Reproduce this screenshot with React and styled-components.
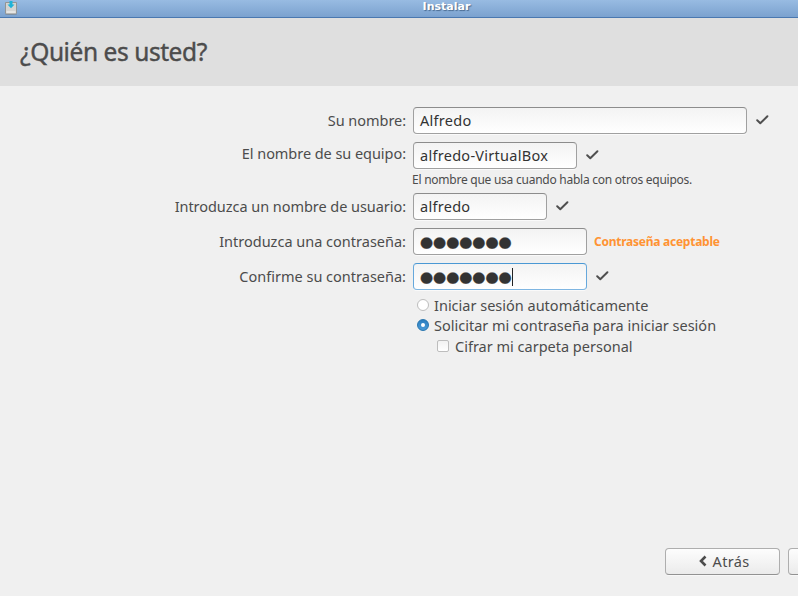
import React from 'react';
import styled, { createGlobalStyle, css } from 'styled-components';

const GlobalStyle = createGlobalStyle`
  * { box-sizing: border-box; }
  body {
    margin: 0;
    overflow: hidden;
    background: #f0f0f0;
    color: #4c4c4c;
    font: 14.5px/20px "Noto Sans", sans-serif;
  }
`;

const Window = styled.div`
  display: flex;
  flex-direction: column;
  width: 100%;
  height: 596px;
  overflow: hidden;
  background: #f0f0f0;
`;

const TitleBar = styled.header`
  display: grid;
  grid-template-columns: 24px 1fr;
  height: 18px;
  flex: none;
  background: linear-gradient(#98bbe2, #7ba2cf);
  border-bottom: 1px solid #4a78b0;
`;

const AppIcon = styled.svg`
  width: 14px;
  height: 16px;
  margin-left: 4px;
`;

const WindowTitle = styled.div`
  padding-left: 71px;
  text-align: center;
  color: #fff;
  font: bold 11px/14px "DejaVu Sans", sans-serif;
  text-shadow: 1px 1px 1px #48698f;
`;

const Banner = styled.div`
  height: 68px;
  flex: none;
  padding: 17px 0 0 20px;
  background: #dfdfdf;
`;

const Heading = styled.h1`
  margin: 0;
  font-size: 24.5px;
  font-weight: 400;
  line-height: 34px;
  letter-spacing: -0.43px;
  -webkit-text-stroke: 0.4px #4c4c4c;
`;

const Form = styled.form`
  display: flex;
  flex-direction: column;
  gap: 8px;
  padding-top: 21px;
`;

const Row = styled.div`
  display: grid;
  grid-template-columns: 406px 1fr;
  column-gap: 7px;
`;

const Label = styled.label`
  height: 27px;
  padding-top: ${(p) => (p.$raised ? 1 : 3)}px;
  text-align: right;
  white-space: nowrap;
  letter-spacing: ${(p) => p.$track ?? -0.05}px;
`;

const Control = styled.div`
  display: flex;
  align-items: center;
  height: 27px;
`;

const Field = styled.div`
  display: flex;
  align-items: center;
  width: ${(p) => p.$width}px;
  height: 27px;
  padding: 0 6px 2px;
  border: 1px solid #a0a0a0;
  border-top-color: #8c8c8c;
  border-radius: 4px;
  background: linear-gradient(#f3f3f3, #fff);
  box-shadow: 0 1px 0 #fafafa;
  color: #333;
  letter-spacing: 0.28px;
  ${(p) =>
    p.$focused &&
    css`
      border-color: #4a98d4 #66a8dc #7fb6e2;
    `}
`;

const Mask = styled.span`
  font: 15px/20px "DejaVu Sans", sans-serif;
  letter-spacing: 0;
  padding-top: 3px;
  -webkit-text-stroke: 0.4px #333;
`;

const Caret = styled.span`
  width: 1px;
  height: 18px;
  margin-top: 2px;
  background: #222;
`;

const Check = styled.svg`
  width: 13px;
  height: 10px;
  margin: 0 0 2px 9px;
  flex: none;
`;

const Hint = styled.div`
  height: 16px;
  margin-left: -1px;
  padding-top: 2px;
  font-size: 12px;
  line-height: 18px;
  letter-spacing: -0.25px;
`;

const Strength = styled.span`
  margin-left: 7px;
  color: #ff9333;
  font-size: 12px;
  font-weight: 700;
  line-height: 18px;
  letter-spacing: -0.25px;
`;

const Options = styled.div`
  display: flex;
  flex-direction: column;
  margin: -3px 0 0 417px;
`;

const Option = styled.label`
  display: flex;
  align-items: center;
  gap: 5px;
  height: 20px;
  margin-top: ${(p) => (p.$nested ? 1 : 0)}px;
  padding-left: ${(p) => (p.$nested ? 20 : 0)}px;
`;

const Radio = styled.span`
  display: grid;
  place-items: center;
  width: 12px;
  height: 12px;
  margin-bottom: 1px;
  border: 1px solid #bdbdbd;
  border-radius: 50%;
  background: #fff;
  ${(p) =>
    p.$on &&
    css`
      border-color: #2675af;
      background: linear-gradient(#2b7ebf, #4b9bd8);
      &::after {
        content: '';
        width: 4px;
        height: 4px;
        border-radius: 50%;
        background: #fff;
      }
    `}
`;

const Checkbox = styled.span`
  width: 12px;
  height: 12px;
  margin: 0 1px 1px 0;
  border: 1px solid #bdbdbd;
  border-radius: 2px;
  background: linear-gradient(#f2f2f2, #fff);
`;

const Footer = styled.footer`
  display: flex;
  gap: 8px;
  margin-top: auto;
  padding: 0 0 21px 665px;
`;

const Button = styled.button`
  display: flex;
  flex: none;
  align-items: center;
  justify-content: center;
  gap: 6px;
  width: 115px;
  height: 27px;
  padding: 0 0 1px 3px;
  border: 1px solid #aeaeae;
  border-bottom-color: #929292;
  border-radius: 4px;
  background: linear-gradient(#fdfdfd, #ebebeb);
  box-shadow: 0 1px 0 #f8f8f8;
  color: #4c4c4c;
  font: 14.5px/20px "Noto Sans", sans-serif;
  letter-spacing: 0.3px;
`;

const Chevron = styled.svg`
  width: 8px;
  height: 12px;
`;

const CheckMark = () => (
  <Check viewBox="0 0 13 10">
    <path d="M1.2 5.200 L4.300 8.200 L11.400 1.300" fill="none" stroke="#4f4f4f" strokeWidth="2" strokeLinecap="round" strokeLinejoin="round" />
  </Check>
);

const DOTS = '●'.repeat(7);

export default function App() {
  return (
    <Window>
      <GlobalStyle />
      <TitleBar>
        <AppIcon viewBox="0 0 14 16">
          <ellipse cx="7" cy="14" rx="6" ry="1" fill="#5f7892" opacity=".6" />
          <path d="M1.500 2.500h11v10.500a1 1 0 0 1-1 1h-9a1 1 0 0 1-1-1z" fill="#d4d4d2" stroke="#929595" />
          <path d="M2.500 12h9" stroke="#f7f7f5" />
          <path d="M5.500 1h3v3.500h2L7 8.200 3.500 4.500h2z" fill="#1eb3d8" />
        </AppIcon>
        <WindowTitle>Instalar</WindowTitle>
      </TitleBar>
      <Banner>
        <Heading>¿Quién es usted?</Heading>
      </Banner>
      <Form>
        <Row>
          <Label>Su nombre:</Label>
          <Control><Field $width={334}>Alfredo</Field><CheckMark /></Control>
        </Row>
        <Row>
          <Label $raised>El nombre de su equipo:</Label>
          <div>
            <Control><Field $width={164}>alfredo-VirtualBox</Field><CheckMark /></Control>
            <Hint>El nombre que usa cuando habla con otros equipos.</Hint>
          </div>
        </Row>
        <Row>
          <Label>Introduzca un nombre de usuario:</Label>
          <Control><Field $width={134}>alfredo</Field><CheckMark /></Control>
        </Row>
        <Row>
          <Label $track={0}>Introduzca una contraseña:</Label>
          <Control><Field $width={174}><Mask>{DOTS}</Mask></Field><Strength>Contraseña aceptable</Strength></Control>
        </Row>
        <Row>
          <Label $track={0}>Confirme su contraseña:</Label>
          <Control><Field $width={174} $focused><Mask>{DOTS}</Mask><Caret /></Field><CheckMark /></Control>
        </Row>
        <Options>
          <Option><Radio />Iniciar sesión automáticamente</Option>
          <Option><Radio $on />Solicitar mi contraseña para iniciar sesión</Option>
          <Option $nested><Checkbox />Cifrar mi carpeta personal</Option>
        </Options>
      </Form>
      <Footer>
        <Button>
          <Chevron viewBox="0 0 8 12">
            <path d="M6.500 1.500 L2 6 L6.500 10.500" fill="none" stroke="#4c4c4c" strokeWidth="2.600" />
          </Chevron>
          Atrás
        </Button>
        <Button aria-label="Continuar" />
      </Footer>
    </Window>
  );
}
